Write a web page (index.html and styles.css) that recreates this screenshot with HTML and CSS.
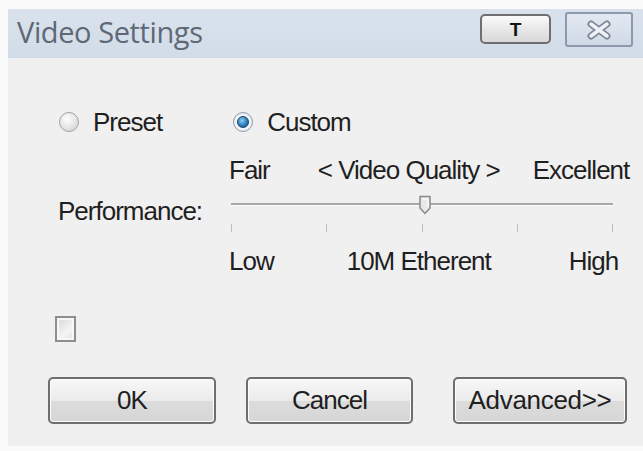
FILE: index.html
```html
<!DOCTYPE html>
<html>
<head>
<meta charset="utf-8">
<title>Video Settings</title>
<link rel="stylesheet" href="styles.css">
</head>
<body>
<div class="window">
  <div class="titlebar">
    <div class="title">Video Settings</div>
    <div class="tb-buttons">
      <div class="tb-btn tb-t">T</div>
      <div class="tb-btn tb-close">
        <svg width="26" height="20" viewBox="0 0 26 20">
          <path d="M5 4 L21 16 M21 4 L5 16" stroke="#7d8797" stroke-width="7" stroke-linecap="round" fill="none"/>
          <path d="M5 4 L21 16 M21 4 L5 16" stroke="#eef2f6" stroke-width="3.5" stroke-linecap="round" fill="none"/>
        </svg>
      </div>
    </div>
  </div>
  <div class="content">
    <div class="radios">
      <div class="radio-item">
        <span class="radio"></span><span class="lbl">Preset</span>
      </div>
      <div class="radio-item custom">
        <span class="radio checked"><span class="dot"></span></span><span class="lbl">Custom</span>
      </div>
    </div>
    <div class="labels top">
      <span class="fair">Fair</span>
      <span class="vq">&lt; Video Quality &gt;</span>
      <span class="exc">Excellent</span>
    </div>
    <div class="slider-row">
      <div class="perf">Performance:</div>
      <div class="slider">
        <div class="track"></div>
        <div class="thumb">
          <svg width="14" height="20" viewBox="0 0 14 20">
            <path d="M2 1.5 H12 V13 L7 18.5 L2 13 Z" fill="#e8e8e8" stroke="#8a8a8a" stroke-width="1.5"/>
            <path d="M4 4 H10 V12" stroke="#ffffff" stroke-width="1" fill="none"/>
          </svg>
        </div>
        <div class="ticks">
          <span></span><span></span><span></span><span></span><span></span>
        </div>
      </div>
    </div>
    <div class="labels bottom">
      <span class="low">Low</span>
      <span class="eth">10M Etherent</span>
      <span class="high">High</span>
    </div>
    <div class="check-row"><span class="checkbox"></span></div>
    <div class="buttons">
      <div class="btn ok">0K</div>
      <div class="btn cancel">Cancel</div>
      <div class="btn adv">Advanced&gt;&gt;</div>
    </div>
  </div>
</div>
</body>
</html>
```
FILE: styles.css
```css
html, body {
  margin: 0;
  padding: 0;
  background: #fbfbfb;
}
body {
  width: 643px;
  height: 451px;
  overflow: hidden;
  font-family: "Liberation Sans", Arial, sans-serif;
}
.window {
  margin: 9px 0 0 8px;
  width: 635px;
  height: 437px;
  display: flex;
  flex-direction: column;
}
.titlebar {
  height: 49px;
  background: linear-gradient(#d9e2ec, #d2dce8);
  display: flex;
  justify-content: space-between;
  align-items: flex-start;
  padding: 0 10px 0 9px;
}
.title {
  font-family: "Open Sans", sans-serif;
  font-size: 29px;
  color: #5e6876;
  line-height: 46px;
  letter-spacing: -0.4px;
}
.tb-buttons {
  display: flex;
  gap: 14px;
}
.tb-btn {
  display: flex;
  align-items: center;
  justify-content: center;
  box-sizing: border-box;
}
.tb-t {
  margin-top: 5px;
  width: 71px;
  height: 30px;
  border: 2px solid #6f6f6f;
  border-radius: 5px;
  background: linear-gradient(#fbfbfb, #e6e6e6 55%, #d8d8d8);
  font-family: "Liberation Sans", Arial, sans-serif;
  font-weight: bold;
  font-size: 19px;
  color: #151515;
  padding-top: 2px;
}
.tb-close {
  margin-top: 3px;
  width: 68px;
  height: 35px;
  border: 2px solid #8c99ad;
  border-radius: 3px;
  background: linear-gradient(#e3e9f1, #cfd9e5);
}
.content {
  flex: 1;
  background: #f0f0f0;
  color: #1f1f1f;
  font-size: 26px;
  letter-spacing: -1px;
}
.radios {
  display: flex;
  height: 30px;
  margin-top: 49px;
  padding-left: 51px;
  align-items: center;
}
.radio-item {
  display: flex;
  align-items: center;
}
.radio-item.custom {
  margin-left: 71px;
}
.radio {
  width: 20px;
  height: 20px;
  box-sizing: border-box;
  border-radius: 50%;
  border: 1.5px solid #a2a2a2;
  background: radial-gradient(circle at 40% 35%, #ffffff, #dcdcdc 70%, #c8c8c8);
  display: flex;
  align-items: center;
  justify-content: center;
  margin-right: 14px;
}
.radio.checked {
  border-color: #8fa0b0;
  background: radial-gradient(circle, #f4f6f8 55%, #c3ccd4);
}
.dot {
  width: 10px;
  height: 10px;
  border-radius: 50%;
  background: radial-gradient(circle at 40% 35%, #8fd0f5, #2b7fc0 55%, #124c7a);
  border: 1px solid #1d3f60;
}
.lbl {
  line-height: 30px;
}
.labels {
  display: flex;
  height: 30px;
  line-height: 30px;
  padding-left: 221px;
}
.labels.top {
  margin-top: 18px;
}
.vq { margin-left: 48px; }
.exc { margin-left: 33px; }
.slider-row {
  display: flex;
  height: 50px;
}
.perf {
  margin-left: 50px;
  margin-top: 12px;
  line-height: 28px;
  height: 28px;
  width: 173px;
}
.slider {
  position: relative;
  width: 382px;
  height: 50px;
}
.track {
  position: absolute;
  left: 0;
  right: 0;
  top: 18px;
  height: 2px;
  background: #a7a7a7;
  border-bottom: 1px solid #fdfdfd;
}
.thumb {
  position: absolute;
  left: 187px;
  top: 10px;
  width: 14px;
  height: 20px;
}
.thumb svg { display: block; }
.ticks {
  position: absolute;
  left: 0;
  right: 0;
  top: 39px;
  display: flex;
  justify-content: space-between;
}
.ticks span {
  width: 1px;
  height: 8px;
  background: #bdbdbd;
}
.labels.bottom {
  margin-top: 11px;
}
.eth { margin-left: 73px; }
.high { margin-left: 78px; }
.check-row {
  margin-top: 40px;
  padding-left: 47px;
  height: 26px;
}
.checkbox {
  display: block;
  width: 21px;
  height: 26px;
  box-sizing: border-box;
  border: 2px solid #8e8e8e;
  background: linear-gradient(135deg, #d6d6d6, #f4f4f4 60%, #e4e4e4);
  box-shadow: inset 0 0 0 2px #f7f7f7;
}
.buttons {
  display: flex;
  margin-top: 35px;
  padding-left: 40px;
}
.btn {
  height: 47px;
  box-sizing: border-box;
  border: 2px solid #6e6e6e;
  border-radius: 5px;
  background: linear-gradient(#f7f7f7, #ebebeb 50%, #dcdcdc 52%, #d6d6d6);
  box-shadow: inset 0 0 0 1px #fbfbfb;
  display: flex;
  align-items: center;
  justify-content: center;
  font-size: 26px;
  color: #1f1f1f;
}
.ok { width: 168px; }
.cancel { width: 167px; margin-left: 30px; }
.adv { width: 174px; margin-left: 40px; letter-spacing: -0.3px; }
```
